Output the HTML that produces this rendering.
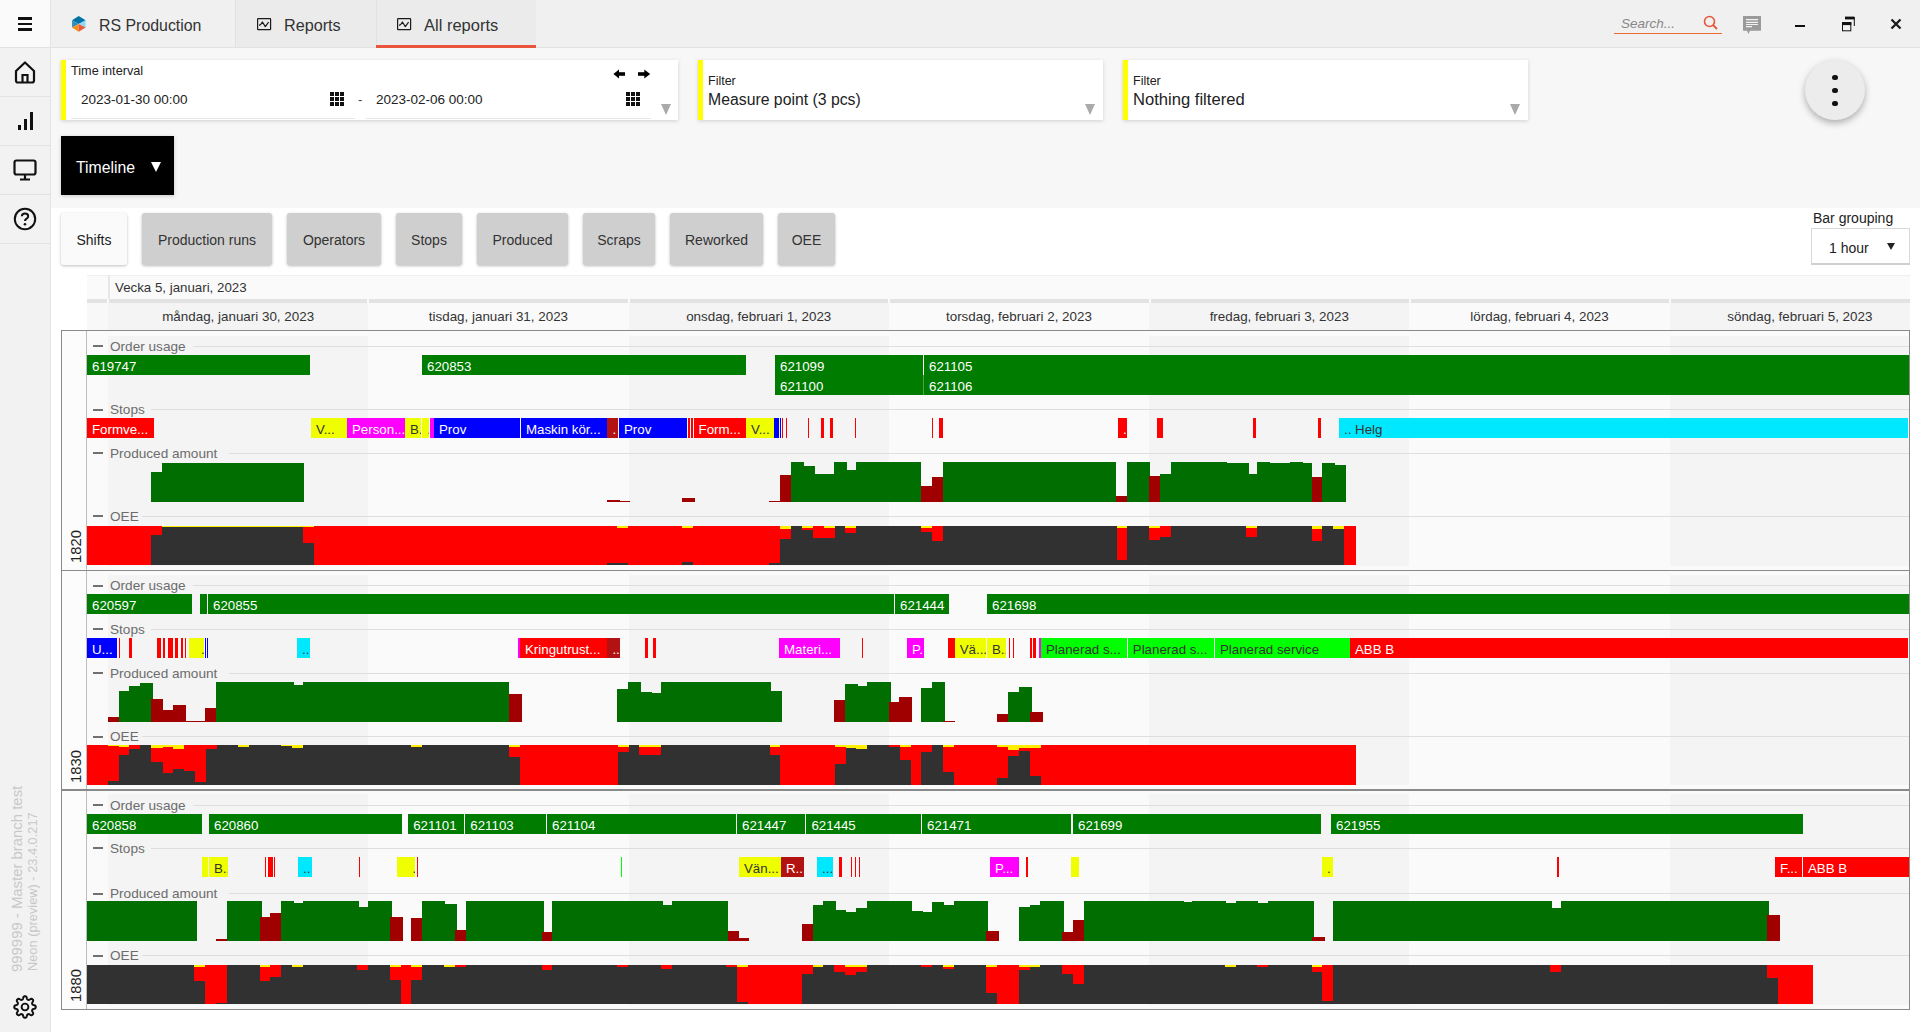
<!DOCTYPE html>
<html><head><meta charset="utf-8">
<style>
*{box-sizing:border-box;margin:0;padding:0}
html,body{width:1920px;height:1032px;overflow:hidden;background:#f7f7f7;font-family:"Liberation Sans",sans-serif;color:#222}
body{position:relative}
.a{position:absolute}
.t{position:absolute;white-space:nowrap}
.card{position:absolute;background:#fff;box-shadow:0 1px 4px rgba(0,0,0,.16)}
.stripe{position:absolute;left:0;top:0;width:5px;height:100%;background:#ffff00}
.btn{position:absolute;top:213px;height:52px;background:#cfcfcf;border-radius:3px;box-shadow:0 1px 3px rgba(0,0,0,.28);font-size:14px;line-height:54px;text-align:center;color:#333;white-space:nowrap}
.tri{position:absolute;width:0;height:0;border-left:5.5px solid transparent;border-right:5.5px solid transparent;border-top:11px solid #aaa}
.grid{position:absolute;width:14px;height:14px;background:
 linear-gradient(#fff,#fff) 4px 0/1px 14px no-repeat,
 linear-gradient(#fff,#fff) 9px 0/1px 14px no-repeat,
 linear-gradient(#fff,#fff) 0 4px/14px 1px no-repeat,
 linear-gradient(#fff,#fff) 0 9px/14px 1px no-repeat,#111}
.sep{position:absolute;left:0;width:50px;height:1px;background:#e2e2e2}
.sec{position:absolute;left:87px;width:1823px;height:20px}
.sec .m{position:absolute;left:6px;top:8px;width:10px;height:2px;background:#555}
.sec .n{position:absolute;left:23px;top:0;font-size:13.5px;line-height:17px;color:#555;background:inherit;padding-right:6px}
.sec .l{position:absolute;left:0;right:0;top:8px;height:1px;background:#dcdcdc}
.r{position:absolute;color:#fff;font-size:13.5px;line-height:19px;white-space:nowrap;overflow:hidden;padding-left:4px}
</style><style>
.b{position:absolute}
.r{position:absolute;color:#fff;font-size:13.3px;line-height:19px;white-space:nowrap;overflow:hidden;padding-left:5px;text-overflow:clip}
.sl{position:absolute;font-size:13.6px;line-height:17px;color:#6c6c6c;white-space:nowrap}
.dh{position:absolute;top:307.5px;width:260.3px;text-align:center;font-size:13.4px;line-height:17px;color:#333;white-space:nowrap}
.rl{position:absolute;width:40px;height:16px;transform-origin:0 0;transform:rotate(-90deg);font-size:14.8px;line-height:16px;color:#222;white-space:nowrap}
</style>
</head><body>
<!-- sidebar -->
<div class="a" style="left:0;top:0;width:51px;height:1032px;background:#f2f2f2;border-right:1px solid #e4e4e4"></div>
<div class="a" style="left:0;top:0;width:50px;height:47px;background:#fafafa"></div>
<div class="sep" style="top:47px"></div>
<div class="sep" style="top:96px"></div>
<div class="sep" style="top:145px"></div>
<div class="sep" style="top:194px"></div>
<div class="sep" style="top:243px"></div>
<!-- hamburger -->
<div class="a" style="left:18px;top:17px;width:14px;height:2.5px;background:#111"></div>
<div class="a" style="left:18px;top:22.5px;width:14px;height:2.5px;background:#111"></div>
<div class="a" style="left:18px;top:28px;width:14px;height:2.5px;background:#111"></div>
<!-- home -->
<svg class="a" style="left:13px;top:59px" width="24" height="26" viewBox="0 0 24 26"><path d="M3 12 L12 3.5 L21 12 V21.5 Q21 23.5 19 23.5 H5 Q3 23.5 3 21.5 Z" fill="none" stroke="#111" stroke-width="2.2" stroke-linejoin="round"/><path d="M9.5 23.5 V16 H14.5 V23.5" fill="none" stroke="#111" stroke-width="2.2"/></svg>
<!-- bar chart -->
<div class="a" style="left:18px;top:125px;width:2.5px;height:5px;background:#111"></div>
<div class="a" style="left:24px;top:119px;width:2.5px;height:11px;background:#111"></div>
<div class="a" style="left:30px;top:112px;width:2.5px;height:18px;background:#111"></div>
<!-- monitor -->
<svg class="a" style="left:13px;top:159px" width="24" height="23" viewBox="0 0 24 23"><rect x="1.5" y="1.5" width="21" height="14" rx="2" fill="none" stroke="#111" stroke-width="2.2"/><path d="M12 16 V20 M7 20.5 H17" stroke="#111" stroke-width="2.2"/></svg>
<!-- help -->
<svg class="a" style="left:13px;top:207px" width="24" height="24" viewBox="0 0 24 24"><circle cx="12" cy="12" r="10.2" fill="none" stroke="#111" stroke-width="2"/><path d="M8.8 9.3 Q9 6.5 12 6.5 Q15.2 6.5 15.2 9.2 Q15.2 11 13.2 12 Q12 12.6 12 14" fill="none" stroke="#111" stroke-width="2"/><circle cx="12" cy="17.3" r="1.3" fill="#111"/></svg>
<!-- version text -->
<div class="t" style="left:9px;top:972px;transform-origin:0 0;transform:rotate(-90deg);font-size:14.9px;line-height:16px;color:#c8c8c8">999999 - Master branch test</div>
<div class="t" style="left:26px;top:971px;transform-origin:0 0;transform:rotate(-90deg);font-size:12.8px;line-height:14px;color:#c8c8c8">Neon (preview) - 23.4.0.217</div>
<!-- gear -->
<svg class="a" style="left:12px;top:994px" width="26" height="26" viewBox="0 0 26 26"><path d="M13.00,2.25 L13.34,2.27 L13.67,2.33 L14.00,2.47 L14.30,2.71 L14.56,3.13 L14.77,3.72 L14.93,4.35 L15.09,4.87 L15.26,5.21 L15.46,5.43 L15.67,5.58 L15.89,5.70 L16.12,5.79 L16.36,5.87 L16.61,5.91 L16.91,5.89 L17.27,5.77 L17.75,5.52 L18.31,5.18 L18.87,4.92 L19.35,4.81 L19.74,4.85 L20.07,4.98 L20.35,5.17 L20.60,5.40 L20.83,5.65 L21.02,5.93 L21.15,6.26 L21.19,6.65 L21.08,7.13 L20.82,7.69 L20.48,8.25 L20.23,8.73 L20.11,9.09 L20.09,9.39 L20.13,9.64 L20.21,9.88 L20.30,10.11 L20.42,10.33 L20.57,10.54 L20.79,10.74 L21.13,10.91 L21.65,11.07 L22.28,11.23 L22.87,11.44 L23.29,11.70 L23.53,12.00 L23.67,12.33 L23.73,12.66 L23.75,13.00 L23.73,13.34 L23.67,13.67 L23.53,14.00 L23.29,14.30 L22.87,14.56 L22.28,14.77 L21.65,14.93 L21.13,15.09 L20.79,15.26 L20.57,15.46 L20.42,15.67 L20.30,15.89 L20.21,16.12 L20.13,16.36 L20.09,16.61 L20.11,16.91 L20.23,17.27 L20.48,17.75 L20.82,18.31 L21.08,18.87 L21.19,19.35 L21.15,19.74 L21.02,20.07 L20.83,20.35 L20.60,20.60 L20.35,20.83 L20.07,21.02 L19.74,21.15 L19.35,21.19 L18.87,21.08 L18.31,20.82 L17.75,20.48 L17.27,20.23 L16.91,20.11 L16.61,20.09 L16.36,20.13 L16.12,20.21 L15.89,20.30 L15.67,20.42 L15.46,20.57 L15.26,20.79 L15.09,21.13 L14.93,21.65 L14.77,22.28 L14.56,22.87 L14.30,23.29 L14.00,23.53 L13.67,23.67 L13.34,23.73 L13.00,23.75 L12.66,23.73 L12.33,23.67 L12.00,23.53 L11.70,23.29 L11.44,22.87 L11.23,22.28 L11.07,21.65 L10.91,21.13 L10.74,20.79 L10.54,20.57 L10.33,20.42 L10.11,20.30 L9.88,20.21 L9.64,20.13 L9.39,20.09 L9.09,20.11 L8.73,20.23 L8.25,20.48 L7.69,20.82 L7.13,21.08 L6.65,21.19 L6.26,21.15 L5.93,21.02 L5.65,20.83 L5.40,20.60 L5.17,20.35 L4.98,20.07 L4.85,19.74 L4.81,19.35 L4.92,18.87 L5.18,18.31 L5.52,17.75 L5.77,17.27 L5.89,16.91 L5.91,16.61 L5.87,16.36 L5.79,16.12 L5.70,15.89 L5.58,15.67 L5.43,15.46 L5.21,15.26 L4.87,15.09 L4.35,14.93 L3.72,14.77 L3.13,14.56 L2.71,14.30 L2.47,14.00 L2.33,13.67 L2.27,13.34 L2.25,13.00 L2.27,12.66 L2.33,12.33 L2.47,12.00 L2.71,11.70 L3.13,11.44 L3.72,11.23 L4.35,11.07 L4.87,10.91 L5.21,10.74 L5.43,10.54 L5.58,10.33 L5.70,10.11 L5.79,9.88 L5.87,9.64 L5.91,9.39 L5.89,9.09 L5.77,8.73 L5.52,8.25 L5.18,7.69 L4.92,7.13 L4.81,6.65 L4.85,6.26 L4.98,5.93 L5.17,5.65 L5.40,5.40 L5.65,5.17 L5.93,4.98 L6.26,4.85 L6.65,4.81 L7.13,4.92 L7.69,5.18 L8.25,5.52 L8.73,5.77 L9.09,5.89 L9.39,5.91 L9.64,5.87 L9.88,5.79 L10.11,5.70 L10.33,5.58 L10.54,5.43 L10.74,5.21 L10.91,4.87 L11.07,4.35 L11.23,3.72 L11.44,3.13 L11.70,2.71 L12.00,2.47 L12.33,2.33 L12.66,2.27 Z" fill="none" stroke="#111" stroke-width="2" stroke-linejoin="round"/><circle cx="13" cy="13" r="3.4" fill="none" stroke="#111" stroke-width="1.9"/></svg>

<!-- top bar -->
<div class="a" style="left:51px;top:0;width:1869px;height:48px;background:#f0f0f0;border-bottom:1px solid #e2e2e2"></div>
<div class="a" style="left:235px;top:0;width:141px;height:47px;background:#ebebeb;border-left:1px solid #e2e2e2"></div>
<div class="a" style="left:376px;top:0;width:160px;height:47px;background:#ebebeb;border-left:1px solid #e2e2e2"></div>
<div class="a" style="left:376px;top:45px;width:160px;height:3px;background:#e8553a"></div>
<!-- logo -->
<svg class="a" style="left:71px;top:15px" width="16" height="18" viewBox="0 0 16 18"><polygon points="7.7,1.1 14.6,5.2 7.7,9 1.05,5.2" fill="#0073a6"/><polygon points="1.05,5.2 7.7,9 1.05,12.6" fill="#2e8fbf"/><polygon points="14.6,5.2 14.6,12.6 7.7,9" fill="#8fd9f7"/><polygon points="1.05,12.6 7.7,9 7.7,16.7" fill="#f39019"/><polygon points="7.7,9 14.6,12.6 7.7,16.7" fill="#eb5a35"/></svg>
<div class="t" style="left:99px;top:1.5px;font-size:15.9px;line-height:48px;color:#333">RS Production</div>
<svg class="a" style="left:256px;top:17px" width="16" height="14" viewBox="0 0 16 14"><rect x="1.6" y="1.6" width="13" height="11" rx="0.6" fill="none" stroke="#1a1a1a" stroke-width="1.2"/><path d="M3 8.4 Q4.8 8.3 6.4 5 L9.3 9.6 L12.6 5.2" fill="none" stroke="#1a1a1a" stroke-width="1.2" stroke-linejoin="round"/></svg>
<div class="t" style="left:284px;top:1.3px;font-size:16.2px;line-height:48px;color:#333">Reports</div>
<svg class="a" style="left:396px;top:17px" width="16" height="14" viewBox="0 0 16 14"><rect x="1.6" y="1.6" width="13" height="11" rx="0.6" fill="none" stroke="#1a1a1a" stroke-width="1.2"/><path d="M3 8.4 Q4.8 8.3 6.4 5 L9.3 9.6 L12.6 5.2" fill="none" stroke="#1a1a1a" stroke-width="1.2" stroke-linejoin="round"/></svg>
<div class="t" style="left:424px;top:1.3px;font-size:16.5px;line-height:48px;color:#333">All reports</div>
<!-- search -->
<div class="t" style="left:1621px;top:16px;font-size:13.5px;line-height:16px;color:#888;font-style:italic">Search...</div>
<div class="a" style="left:1614px;top:32.5px;width:108px;height:1.5px;background:#f06a35"></div>
<svg class="a" style="left:1703px;top:15px" width="16" height="16" viewBox="0 0 16 16"><circle cx="6.5" cy="6.5" r="5" fill="none" stroke="#e8553a" stroke-width="1.6"/><path d="M10 10 L14 14" stroke="#e8553a" stroke-width="1.8"/></svg>
<svg class="a" style="left:1743px;top:16px" width="18" height="19" viewBox="0 0 18 19"><path d="M0 0 H18 V14.8 H7 L5.5 18 L4 14.8 H0 Z" fill="#9a9a9a"/><path d="M3 3.6 H15 M3 6.4 H15 M3 8.5 H15 M3 10.6 H9" stroke="#f2f2f2" stroke-width="1.1"/></svg>
<div class="a" style="left:1795px;top:25px;width:10px;height:2px;background:#111"></div>
<svg class="a" style="left:1840px;top:16px" width="16" height="16" viewBox="0 0 16 16"><path d="M5 1.1 H14.3 V10" fill="none" stroke="#111" stroke-width="1"/><rect x="5" y="1" width="9.5" height="2.4" fill="#111"/><rect x="2.5" y="6.6" width="8.3" height="8.2" fill="none" stroke="#111" stroke-width="1"/><rect x="2" y="6.1" width="9.3" height="3" fill="#111"/></svg>
<svg class="a" style="left:1890px;top:18px" width="12" height="12" viewBox="0 0 12 12"><path d="M1.5 1.5 L10.5 10.5 M10.5 1.5 L1.5 10.5" stroke="#1a1a1a" stroke-width="2.3"/></svg>

<!-- time interval card -->
<div class="card" style="left:61px;top:60px;width:617px;height:60px">
  <div class="stripe"></div>
</div>
<div class="t" style="left:71px;top:64px;font-size:12.7px;line-height:15px;color:#222">Time interval</div>
<div class="t" style="left:81px;top:92px;font-size:13.5px;line-height:16px;color:#222">2023-01-30 00:00</div>
<div class="grid" style="left:330px;top:92px"></div>
<div class="a" style="left:71px;top:118px;width:284px;height:1px;background:#e6e6e6"></div>
<div class="t" style="left:358px;top:92px;font-size:13px;line-height:16px;color:#444">-</div>
<div class="t" style="left:376px;top:92px;font-size:13.5px;line-height:16px;color:#222">2023-02-06 00:00</div>
<div class="grid" style="left:626px;top:92px"></div>
<div class="a" style="left:366px;top:118px;width:285px;height:1px;background:#e6e6e6"></div>
<svg class="a" style="left:612px;top:68px" width="40" height="12" viewBox="0 0 40 12"><path d="M13 6 H6" stroke="#000" stroke-width="3.6"/><path d="M1.4 6 L7 1.5 V10.5 Z" fill="#000"/><path d="M26 6 H33" stroke="#000" stroke-width="3.6"/><path d="M38.2 6 L32.3 1.5 V10.5 Z" fill="#000"/></svg>
<div class="tri" style="left:661px;top:104px"></div>

<!-- filter cards -->
<div class="card" style="left:698px;top:60px;width:405px;height:60px"><div class="stripe"></div></div>
<div class="t" style="left:708px;top:74px;font-size:12.5px;line-height:15px;color:#222">Filter</div>
<div class="t" style="left:708px;top:91px;font-size:15.8px;line-height:18px;color:#222">Measure point (3 pcs)</div>
<div class="tri" style="left:1085px;top:104px"></div>
<div class="card" style="left:1123px;top:60px;width:405px;height:60px"><div class="stripe"></div></div>
<div class="t" style="left:1133px;top:74px;font-size:12.5px;line-height:15px;color:#222">Filter</div>
<div class="t" style="left:1133px;top:91px;font-size:16.6px;line-height:18px;color:#222">Nothing filtered</div>
<div class="tri" style="left:1510px;top:104px"></div>
<!-- kebab -->
<div class="a" style="left:1805px;top:60px;width:60px;height:60px;border-radius:50%;background:#ececec;box-shadow:0 3px 7px rgba(0,0,0,.3)"></div>
<div class="a" style="left:1832px;top:74.5px;width:5.5px;height:5.5px;border-radius:50%;background:#111"></div>
<div class="a" style="left:1832px;top:87.5px;width:5.5px;height:5.5px;border-radius:50%;background:#111"></div>
<div class="a" style="left:1832px;top:100.5px;width:5.5px;height:5.5px;border-radius:50%;background:#111"></div>

<!-- timeline button -->
<div class="a" style="left:61px;top:136px;width:113px;height:59px;background:#000;box-shadow:0 1px 4px rgba(0,0,0,.2)"></div>
<div class="t" style="left:76px;top:158.5px;font-size:15.8px;line-height:18px;color:#fff">Timeline</div>
<div class="a" style="left:151px;top:162px;width:0;height:0;border-left:5px solid transparent;border-right:5px solid transparent;border-top:10px solid #fff"></div>

<!-- white area -->
<div class="a" style="left:51px;top:208px;width:1869px;height:824px;background:#fff"></div>
<div class="a" style="left:61px;top:213px;width:66px;height:52px;background:#fafafa;border-radius:3px;box-shadow:0 1px 3px rgba(0,0,0,.25);font-size:14px;line-height:54px;text-align:center;color:#222">Shifts</div>
<div class="btn" style="left:142px;width:130px">Production runs</div>
<div class="btn" style="left:287px;width:94px">Operators</div>
<div class="btn" style="left:396px;width:66px">Stops</div>
<div class="btn" style="left:477px;width:91px">Produced</div>
<div class="btn" style="left:583px;width:72px">Scraps</div>
<div class="btn" style="left:670px;width:93px">Reworked</div>
<div class="btn" style="left:778px;width:57px">OEE</div>
<div class="t" style="left:1813px;top:210px;font-size:14px;line-height:17px;color:#222">Bar grouping</div>
<div class="a" style="left:1811px;top:228px;width:99px;height:37px;background:#fff;border:1px solid #d8d8d8;border-bottom:2px solid #cfcfcf"></div>
<div class="t" style="left:1829px;top:240px;font-size:14px;line-height:17px;color:#222">1 hour</div>
<div class="a" style="left:1887px;top:243px;width:0;height:0;border-left:4px solid transparent;border-right:4px solid transparent;border-top:7px solid #222"></div>
<!-- timeline header -->
<div class="a" style="left:87px;top:275px;width:1823px;height:56px;background:#fafafa"></div>
<div class="a" style="left:87px;top:303px;width:21px;height:28px;background:#f8f8f8"></div>
<div class="a" style="left:108px;top:303px;width:260.3px;height:28px;background:#f4f4f4"></div>
<div class="a" style="left:628.6px;top:303px;width:260.3px;height:28px;background:#f4f4f4"></div>
<div class="a" style="left:1149.1px;top:303px;width:260.3px;height:28px;background:#f4f4f4"></div>
<div class="a" style="left:1669.7px;top:303px;width:240px;height:28px;background:#f4f4f4"></div>
<div class="a" style="left:87px;top:275px;width:1823px;height:1px;background:#efefef"></div>
<div class="a" style="left:107.5px;top:275px;width:2px;height:28px;background:#e6e6e6"></div>
<div class="a" style="left:87px;top:299px;width:1823px;height:4px;background:#e3e3e3"></div>
<div class="a" style="left:106.5px;top:299px;width:2px;height:4px;background:#fafafa"></div>
<div class="a" style="left:367px;top:299px;width:2px;height:4px;background:#fafafa"></div>
<div class="a" style="left:628px;top:299px;width:2px;height:4px;background:#fafafa"></div>
<div class="a" style="left:888px;top:299px;width:2px;height:4px;background:#fafafa"></div>
<div class="a" style="left:1148.5px;top:299px;width:2px;height:4px;background:#fafafa"></div>
<div class="a" style="left:1408.5px;top:299px;width:2px;height:4px;background:#fafafa"></div>
<div class="a" style="left:1669px;top:299px;width:2px;height:4px;background:#fafafa"></div>
<div class="t" style="left:115px;top:279.5px;font-size:13.3px;line-height:16px;color:#333">Vecka 5, januari, 2023</div>
<div class="dh" style="left:108px">måndag, januari 30, 2023</div>
<div class="dh" style="left:368.3px">tisdag, januari 31, 2023</div>
<div class="dh" style="left:628.6px">onsdag, februari 1, 2023</div>
<div class="dh" style="left:888.8px">torsdag, februari 2, 2023</div>
<div class="dh" style="left:1149.1px">fredag, februari 3, 2023</div>
<div class="dh" style="left:1409.4px">lördag, februari 4, 2023</div>
<div class="dh" style="left:1669.7px">söndag, februari 5, 2023</div>
<!-- frame -->
<div class="a" style="left:61px;top:330px;width:1849px;height:680px;background:#fcfcfc;border:1px solid #8a8a8a"></div>
<div class="b" style="left:87px;top:331px;width:1822px;height:239px;background:#fafafa"></div>
<div class="b" style="left:108px;top:336px;width:260px;height:230px;background:#f4f4f4"></div>
<div class="b" style="left:629px;top:336px;width:260px;height:230px;background:#f4f4f4"></div>
<div class="b" style="left:1149px;top:336px;width:260px;height:230px;background:#f4f4f4"></div>
<div class="b" style="left:1670px;top:336px;width:239px;height:230px;background:#f4f4f4"></div>
<div class="b" style="left:87px;top:570px;width:1822px;height:220px;background:#fafafa"></div>
<div class="b" style="left:108px;top:575px;width:260px;height:210px;background:#f4f4f4"></div>
<div class="b" style="left:629px;top:575px;width:260px;height:210px;background:#f4f4f4"></div>
<div class="b" style="left:1149px;top:575px;width:260px;height:210px;background:#f4f4f4"></div>
<div class="b" style="left:1670px;top:575px;width:239px;height:210px;background:#f4f4f4"></div>
<div class="b" style="left:87px;top:790px;width:1822px;height:219px;background:#fafafa"></div>
<div class="b" style="left:108px;top:794px;width:260px;height:211px;background:#f4f4f4"></div>
<div class="b" style="left:629px;top:794px;width:260px;height:211px;background:#f4f4f4"></div>
<div class="b" style="left:1149px;top:794px;width:260px;height:211px;background:#f4f4f4"></div>
<div class="b" style="left:1670px;top:794px;width:239px;height:211px;background:#f4f4f4"></div>
<div class="b" style="left:93px;top:345.0px;width:10px;height:2px;background:#707070"></div>
<div class="sl" style="left:110px;top:337.7px">Order usage</div>
<div class="b" style="left:193.0px;top:345.5px;width:1716.0px;height:1px;background:#dedede"></div>
<div class="b" style="left:93px;top:408.5px;width:10px;height:2px;background:#707070"></div>
<div class="sl" style="left:110px;top:401.2px">Stops</div>
<div class="b" style="left:151.0px;top:409.0px;width:1758.0px;height:1px;background:#dedede"></div>
<div class="b" style="left:93px;top:452.4px;width:10px;height:2px;background:#707070"></div>
<div class="sl" style="left:110px;top:445.1px">Produced amount</div>
<div class="b" style="left:229.0px;top:452.9px;width:1680.0px;height:1px;background:#dedede"></div>
<div class="b" style="left:93px;top:515.3px;width:10px;height:2px;background:#707070"></div>
<div class="sl" style="left:110px;top:508.0px">OEE</div>
<div class="b" style="left:142.0px;top:515.8px;width:1767.0px;height:1px;background:#dedede"></div>
<div class="b" style="left:93px;top:584.5px;width:10px;height:2px;background:#707070"></div>
<div class="sl" style="left:110px;top:577.2px">Order usage</div>
<div class="b" style="left:193.0px;top:585.0px;width:1716.0px;height:1px;background:#dedede"></div>
<div class="b" style="left:93px;top:628.0px;width:10px;height:2px;background:#707070"></div>
<div class="sl" style="left:110px;top:620.7px">Stops</div>
<div class="b" style="left:151.0px;top:628.5px;width:1758.0px;height:1px;background:#dedede"></div>
<div class="b" style="left:93px;top:672.0px;width:10px;height:2px;background:#707070"></div>
<div class="sl" style="left:110px;top:664.7px">Produced amount</div>
<div class="b" style="left:229.0px;top:672.5px;width:1680.0px;height:1px;background:#dedede"></div>
<div class="b" style="left:93px;top:735.6px;width:10px;height:2px;background:#707070"></div>
<div class="sl" style="left:110px;top:728.3px">OEE</div>
<div class="b" style="left:142.0px;top:736.1px;width:1767.0px;height:1px;background:#dedede"></div>
<div class="b" style="left:93px;top:804.3px;width:10px;height:2px;background:#707070"></div>
<div class="sl" style="left:110px;top:797.0px">Order usage</div>
<div class="b" style="left:193.0px;top:804.8px;width:1716.0px;height:1px;background:#dedede"></div>
<div class="b" style="left:93px;top:847.4px;width:10px;height:2px;background:#707070"></div>
<div class="sl" style="left:110px;top:840.1px">Stops</div>
<div class="b" style="left:151.0px;top:847.9px;width:1758.0px;height:1px;background:#dedede"></div>
<div class="b" style="left:93px;top:892.5px;width:10px;height:2px;background:#707070"></div>
<div class="sl" style="left:110px;top:885.2px">Produced amount</div>
<div class="b" style="left:229.0px;top:893.0px;width:1680.0px;height:1px;background:#dedede"></div>
<div class="b" style="left:93px;top:954.7px;width:10px;height:2px;background:#707070"></div>
<div class="sl" style="left:110px;top:947.4px">OEE</div>
<div class="b" style="left:142.0px;top:955.2px;width:1767.0px;height:1px;background:#dedede"></div>
<div class="b" style="left:87px;top:355px;width:223px;height:20px;background:#007c00"></div>
<div class="r" style="left:87.0px;top:356.6px;width:223.0px;color:#fff">619747</div>
<div class="b" style="left:422px;top:355px;width:324px;height:20px;background:#007c00"></div>
<div class="r" style="left:422.0px;top:356.6px;width:324.0px;color:#fff">620853</div>
<div class="b" style="left:775px;top:355px;width:148px;height:40px;background:#007c00"></div>
<div class="r" style="left:775.0px;top:356.6px;width:148.0px;color:#fff">621099</div>
<div class="r" style="left:775.0px;top:376.6px;width:148.0px;color:#fff">621100</div>
<div class="b" style="left:924px;top:355px;width:985px;height:40px;background:#007c00"></div>
<div class="r" style="left:924.0px;top:356.6px;width:985.0px;color:#fff">621105</div>
<div class="r" style="left:924.0px;top:376.6px;width:985.0px;color:#fff">621106</div>
<div class="b" style="left:923px;top:375px;width:1px;height:20px;background:#4f9f4f"></div>
<div class="b" style="left:87px;top:418px;width:67px;height:20px;background:#ff0000"></div>
<div class="r" style="left:87.0px;top:419.7px;width:67.0px;color:#fff">Formve...</div>
<div class="b" style="left:311px;top:418px;width:30px;height:20px;background:#f0ff00"></div>
<div class="r" style="left:311.0px;top:419.7px;width:30.0px;color:#333">V...</div>
<div class="b" style="left:341px;top:418px;width:6px;height:20px;background:#f0ff00"></div>
<div class="r" style="left:341.0px;top:419.7px;width:6.0px;color:#333">.</div>
<div class="b" style="left:347px;top:418px;width:58px;height:20px;background:#ff00ff"></div>
<div class="r" style="left:347.0px;top:419.7px;width:58.0px;color:#fff">Person...</div>
<div class="b" style="left:405px;top:418px;width:16px;height:20px;background:#f0ff00"></div>
<div class="r" style="left:405.0px;top:419.7px;width:16.4px;color:#333">B.</div>
<div class="b" style="left:422px;top:418px;width:7px;height:20px;background:#f0ff00"></div>
<div class="r" style="left:422.2px;top:419.7px;width:6.8px;color:#333">.</div>
<div class="b" style="left:430px;top:418px;width:4px;height:20px;background:#ff00ff"></div>
<div class="b" style="left:434px;top:418px;width:86px;height:20px;background:#0000ff"></div>
<div class="r" style="left:434.0px;top:419.7px;width:86.0px;color:#fff">Prov</div>
<div class="b" style="left:521px;top:418px;width:86px;height:20px;background:#0000ff"></div>
<div class="r" style="left:521.0px;top:419.7px;width:86.4px;color:#fff">Maskin kör...</div>
<div class="b" style="left:607px;top:418px;width:11px;height:20px;background:#b31212"></div>
<div class="r" style="left:607.4px;top:419.7px;width:10.3px;color:#fff">.</div>
<div class="b" style="left:619px;top:418px;width:68px;height:20px;background:#0000ff"></div>
<div class="r" style="left:619.0px;top:419.7px;width:68.0px;color:#fff">Prov</div>
<div class="b" style="left:688px;top:418px;width:2px;height:20px;background:#ff0000"></div>
<div class="b" style="left:691px;top:418px;width:2px;height:20px;background:#ff0000"></div>
<div class="b" style="left:694px;top:418px;width:52px;height:20px;background:#ff0000"></div>
<div class="r" style="left:693.6px;top:419.7px;width:52.4px;color:#fff">Form...</div>
<div class="b" style="left:746px;top:418px;width:28px;height:20px;background:#f0ff00"></div>
<div class="r" style="left:746.0px;top:419.7px;width:28.0px;color:#333">V...</div>
<div class="b" style="left:774px;top:418px;width:5px;height:20px;background:#0000ff"></div>
<div class="b" style="left:780px;top:418px;width:1px;height:20px;background:#0000ff"></div>
<div class="b" style="left:782px;top:418px;width:1px;height:20px;background:#ff0000"></div>
<div class="b" style="left:786px;top:418px;width:1px;height:20px;background:#ff0000"></div>
<div class="b" style="left:808px;top:418px;width:1px;height:20px;background:#ff0000"></div>
<div class="b" style="left:821px;top:418px;width:3px;height:20px;background:#ff0000"></div>
<div class="b" style="left:830px;top:418px;width:3px;height:20px;background:#ff0000"></div>
<div class="b" style="left:855px;top:418px;width:1px;height:20px;background:#ff0000"></div>
<div class="b" style="left:932px;top:418px;width:1px;height:20px;background:#ff0000"></div>
<div class="b" style="left:939px;top:418px;width:4px;height:20px;background:#ff0000"></div>
<div class="b" style="left:1118px;top:418px;width:9px;height:20px;background:#ff0000"></div>
<div class="r" style="left:1118.0px;top:419.7px;width:9.0px;color:#fff">.</div>
<div class="b" style="left:1157px;top:418px;width:6px;height:20px;background:#ff0000"></div>
<div class="b" style="left:1253px;top:418px;width:3px;height:20px;background:#ff0000"></div>
<div class="b" style="left:1318px;top:418px;width:3px;height:20px;background:#ff0000"></div>
<div class="b" style="left:1339px;top:418px;width:569px;height:20px;background:#00e8ff"></div>
<div class="r" style="left:1339.0px;top:419.7px;width:569.0px;color:#333">.. Helg</div>
<div class="b" style="left:151px;top:472px;width:11px;height:30px;background:#006e00"></div>
<div class="b" style="left:162px;top:463px;width:142px;height:39px;background:#006e00"></div>
<div class="b" style="left:607px;top:500px;width:13px;height:2px;background:#a00000"></div>
<div class="b" style="left:620px;top:501px;width:10px;height:1px;background:#a00000"></div>
<div class="b" style="left:682px;top:498px;width:13px;height:4px;background:#a00000"></div>
<div class="b" style="left:769px;top:501px;width:11px;height:1px;background:#a00000"></div>
<div class="b" style="left:780px;top:475px;width:11px;height:27px;background:#a00000"></div>
<div class="b" style="left:791px;top:462px;width:13px;height:40px;background:#006e00"></div>
<div class="b" style="left:804px;top:466px;width:11px;height:36px;background:#006e00"></div>
<div class="b" style="left:815px;top:474px;width:19px;height:28px;background:#006e00"></div>
<div class="b" style="left:834px;top:462px;width:13px;height:40px;background:#006e00"></div>
<div class="b" style="left:847px;top:470px;width:9px;height:32px;background:#006e00"></div>
<div class="b" style="left:856px;top:462px;width:65px;height:40px;background:#006e00"></div>
<div class="b" style="left:921px;top:486px;width:11px;height:16px;background:#a00000"></div>
<div class="b" style="left:932px;top:477px;width:11px;height:25px;background:#a00000"></div>
<div class="b" style="left:943px;top:462px;width:173px;height:40px;background:#006e00"></div>
<div class="b" style="left:1116px;top:496px;width:11px;height:6px;background:#a00000"></div>
<div class="b" style="left:1127px;top:462px;width:23px;height:40px;background:#006e00"></div>
<div class="b" style="left:1149px;top:476px;width:11px;height:26px;background:#a00000"></div>
<div class="b" style="left:1160px;top:474px;width:11px;height:28px;background:#006e00"></div>
<div class="b" style="left:1171px;top:462px;width:56px;height:40px;background:#006e00"></div>
<div class="b" style="left:1227px;top:463px;width:22px;height:39px;background:#006e00"></div>
<div class="b" style="left:1249px;top:474px;width:8px;height:28px;background:#006e00"></div>
<div class="b" style="left:1257px;top:462px;width:13px;height:40px;background:#006e00"></div>
<div class="b" style="left:1270px;top:463px;width:20px;height:39px;background:#006e00"></div>
<div class="b" style="left:1290px;top:462px;width:13px;height:40px;background:#006e00"></div>
<div class="b" style="left:1303px;top:463px;width:9px;height:39px;background:#006e00"></div>
<div class="b" style="left:1312px;top:477px;width:10px;height:25px;background:#a00000"></div>
<div class="b" style="left:1322px;top:463px;width:13px;height:39px;background:#006e00"></div>
<div class="b" style="left:1335px;top:465px;width:11px;height:37px;background:#006e00"></div>
<div class="b" style="left:87px;top:526px;width:1269px;height:39px;background:#313131"></div>
<div class="b" style="left:87px;top:526px;width:64px;height:39px;background:#ff0000"></div>
<div class="b" style="left:151px;top:526px;width:11px;height:9px;background:#ff0000"></div>
<div class="b" style="left:162px;top:526px;width:141px;height:1px;background:#ffee00"></div>
<div class="b" style="left:303px;top:526px;width:11px;height:1px;background:#ffee00"></div>
<div class="b" style="left:303px;top:527px;width:11px;height:16px;background:#ff0000"></div>
<div class="b" style="left:314px;top:526px;width:466px;height:39px;background:#ff0000"></div>
<div class="b" style="left:780px;top:526px;width:11px;height:3px;background:#ffee00"></div>
<div class="b" style="left:780px;top:529px;width:11px;height:10px;background:#ff0000"></div>
<div class="b" style="left:802px;top:526px;width:11px;height:2px;background:#ffee00"></div>
<div class="b" style="left:802px;top:528px;width:11px;height:2px;background:#ff0000"></div>
<div class="b" style="left:813px;top:526px;width:11px;height:12px;background:#ff0000"></div>
<div class="b" style="left:824px;top:526px;width:11px;height:2px;background:#ffee00"></div>
<div class="b" style="left:824px;top:528px;width:11px;height:10px;background:#ff0000"></div>
<div class="b" style="left:845px;top:526px;width:11px;height:2px;background:#ffee00"></div>
<div class="b" style="left:845px;top:528px;width:11px;height:5px;background:#ff0000"></div>
<div class="b" style="left:921px;top:526px;width:11px;height:2px;background:#ffee00"></div>
<div class="b" style="left:921px;top:528px;width:11px;height:4px;background:#ff0000"></div>
<div class="b" style="left:932px;top:526px;width:11px;height:15px;background:#ff0000"></div>
<div class="b" style="left:1117px;top:526px;width:10px;height:2px;background:#ffee00"></div>
<div class="b" style="left:1117px;top:528px;width:10px;height:32px;background:#ff0000"></div>
<div class="b" style="left:1149px;top:526px;width:11px;height:2px;background:#ffee00"></div>
<div class="b" style="left:1149px;top:528px;width:11px;height:12px;background:#ff0000"></div>
<div class="b" style="left:1160px;top:526px;width:11px;height:11px;background:#ff0000"></div>
<div class="b" style="left:1246px;top:526px;width:11px;height:2px;background:#ffee00"></div>
<div class="b" style="left:1246px;top:528px;width:11px;height:9px;background:#ff0000"></div>
<div class="b" style="left:1312px;top:526px;width:10px;height:3px;background:#ffee00"></div>
<div class="b" style="left:1312px;top:529px;width:10px;height:12px;background:#ff0000"></div>
<div class="b" style="left:1333px;top:526px;width:11px;height:3px;background:#ffee00"></div>
<div class="b" style="left:1344px;top:526px;width:12px;height:39px;background:#ff0000"></div>
<div class="b" style="left:607px;top:563px;width:21px;height:2px;background:#313131"></div>
<div class="b" style="left:617px;top:526px;width:11px;height:2px;background:#ffee00"></div>
<div class="b" style="left:682px;top:526px;width:11px;height:2px;background:#ffee00"></div>
<div class="b" style="left:682px;top:562px;width:11px;height:3px;background:#313131"></div>
<div class="b" style="left:769px;top:563px;width:11px;height:2px;background:#313131"></div>
<div class="b" style="left:87px;top:594px;width:105px;height:20px;background:#007c00"></div>
<div class="r" style="left:87.0px;top:595.6px;width:104.6px;color:#fff">620597</div>
<div class="b" style="left:200px;top:594px;width:7px;height:20px;background:#007c00"></div>
<div class="b" style="left:208px;top:594px;width:686px;height:20px;background:#007c00"></div>
<div class="r" style="left:208.0px;top:595.6px;width:686.0px;color:#fff">620855</div>
<div class="b" style="left:895px;top:594px;width:54px;height:20px;background:#007c00"></div>
<div class="r" style="left:895.0px;top:595.6px;width:54.0px;color:#fff">621444</div>
<div class="b" style="left:987px;top:594px;width:922px;height:20px;background:#007c00"></div>
<div class="r" style="left:987.0px;top:595.6px;width:922.0px;color:#fff">621698</div>
<div class="b" style="left:87px;top:638px;width:30px;height:20px;background:#0000ff"></div>
<div class="r" style="left:87.0px;top:639.5px;width:30.0px;color:#fff">U...</div>
<div class="b" style="left:119px;top:638px;width:1px;height:20px;background:#ff0000"></div>
<div class="b" style="left:129px;top:638px;width:3px;height:20px;background:#ff0000"></div>
<div class="b" style="left:157px;top:638px;width:4px;height:20px;background:#ff0000"></div>
<div class="b" style="left:163px;top:638px;width:2px;height:20px;background:#ff0000"></div>
<div class="b" style="left:168px;top:638px;width:5px;height:20px;background:#ff0000"></div>
<div class="b" style="left:175px;top:638px;width:3px;height:20px;background:#ff0000"></div>
<div class="b" style="left:181px;top:638px;width:2px;height:20px;background:#ff0000"></div>
<div class="b" style="left:185px;top:638px;width:1px;height:20px;background:#ff0000"></div>
<div class="b" style="left:189px;top:638px;width:7px;height:20px;background:#f0ff00"></div>
<div class="b" style="left:196px;top:638px;width:8px;height:20px;background:#f0ff00"></div>
<div class="r" style="left:196.0px;top:639.5px;width:8.0px;color:#333">.</div>
<div class="b" style="left:205px;top:638px;width:1px;height:20px;background:#0000ff"></div>
<div class="b" style="left:207px;top:638px;width:1px;height:20px;background:#0000ff"></div>
<div class="b" style="left:297px;top:638px;width:13px;height:20px;background:#00e8ff"></div>
<div class="r" style="left:297.0px;top:639.5px;width:13.0px;color:#333">..</div>
<div class="b" style="left:518px;top:638px;width:2px;height:20px;background:#ff00ff"></div>
<div class="b" style="left:520px;top:638px;width:87px;height:20px;background:#ff0000"></div>
<div class="r" style="left:520.0px;top:639.5px;width:87.4px;color:#fff">Kringutrust...</div>
<div class="b" style="left:607px;top:638px;width:13px;height:20px;background:#b31212"></div>
<div class="r" style="left:607.4px;top:639.5px;width:12.3px;color:#fff">..</div>
<div class="b" style="left:645px;top:638px;width:3px;height:20px;background:#ff0000"></div>
<div class="b" style="left:653px;top:638px;width:3px;height:20px;background:#ff0000"></div>
<div class="b" style="left:779px;top:638px;width:61px;height:20px;background:#ff00ff"></div>
<div class="r" style="left:779.0px;top:639.5px;width:60.6px;color:#fff">Materi...</div>
<div class="b" style="left:862px;top:638px;width:1px;height:20px;background:#ff0000"></div>
<div class="b" style="left:907px;top:638px;width:17px;height:20px;background:#ff00ff"></div>
<div class="r" style="left:907.0px;top:639.5px;width:17.0px;color:#fff">P.</div>
<div class="b" style="left:948px;top:638px;width:7px;height:20px;background:#ff0000"></div>
<div class="b" style="left:955px;top:638px;width:31px;height:20px;background:#f0ff00"></div>
<div class="r" style="left:954.7px;top:639.5px;width:31.7px;color:#333">Vä...</div>
<div class="b" style="left:987px;top:638px;width:19px;height:20px;background:#f0ff00"></div>
<div class="r" style="left:987.0px;top:639.5px;width:18.5px;color:#333">B..</div>
<div class="b" style="left:1009px;top:638px;width:1px;height:20px;background:#ff0000"></div>
<div class="b" style="left:1013px;top:638px;width:1px;height:20px;background:#ff0000"></div>
<div class="b" style="left:1030px;top:638px;width:2px;height:20px;background:#ff0000"></div>
<div class="b" style="left:1033px;top:638px;width:3px;height:20px;background:#ff0000"></div>
<div class="b" style="left:1039px;top:638px;width:2px;height:20px;background:#ff00ff"></div>
<div class="b" style="left:1041px;top:638px;width:86px;height:20px;background:#00ff00"></div>
<div class="r" style="left:1041.0px;top:639.5px;width:85.5px;color:#333">Planerad s...</div>
<div class="b" style="left:1128px;top:638px;width:86px;height:20px;background:#00ff00"></div>
<div class="r" style="left:1127.8px;top:639.5px;width:86.2px;color:#333">Planerad s...</div>
<div class="b" style="left:1215px;top:638px;width:135px;height:20px;background:#00ff00"></div>
<div class="r" style="left:1215.0px;top:639.5px;width:135.0px;color:#333">Planerad service</div>
<div class="b" style="left:1350px;top:638px;width:558px;height:20px;background:#ff0000"></div>
<div class="r" style="left:1350.0px;top:639.5px;width:558.0px;color:#fff">ABB B</div>
<div class="b" style="left:108px;top:717px;width:11px;height:5px;background:#a00000"></div>
<div class="b" style="left:119px;top:691px;width:10px;height:31px;background:#006e00"></div>
<div class="b" style="left:129px;top:686px;width:11px;height:36px;background:#006e00"></div>
<div class="b" style="left:140px;top:683px;width:13px;height:39px;background:#006e00"></div>
<div class="b" style="left:151px;top:699px;width:12px;height:23px;background:#a00000"></div>
<div class="b" style="left:163px;top:710px;width:10px;height:12px;background:#a00000"></div>
<div class="b" style="left:173px;top:705px;width:13px;height:17px;background:#a00000"></div>
<div class="b" style="left:186px;top:721px;width:19px;height:1px;background:#a00000"></div>
<div class="b" style="left:205px;top:708px;width:11px;height:14px;background:#a00000"></div>
<div class="b" style="left:216px;top:682px;width:78px;height:40px;background:#006e00"></div>
<div class="b" style="left:294px;top:685px;width:9px;height:37px;background:#006e00"></div>
<div class="b" style="left:303px;top:682px;width:206px;height:40px;background:#006e00"></div>
<div class="b" style="left:509px;top:694px;width:13px;height:28px;background:#a00000"></div>
<div class="b" style="left:617px;top:689px;width:11px;height:33px;background:#006e00"></div>
<div class="b" style="left:628px;top:682px;width:13px;height:40px;background:#006e00"></div>
<div class="b" style="left:641px;top:692px;width:11px;height:30px;background:#006e00"></div>
<div class="b" style="left:652px;top:693px;width:9px;height:29px;background:#006e00"></div>
<div class="b" style="left:661px;top:682px;width:110px;height:40px;background:#006e00"></div>
<div class="b" style="left:771px;top:691px;width:11px;height:31px;background:#006e00"></div>
<div class="b" style="left:834px;top:700px;width:11px;height:22px;background:#a00000"></div>
<div class="b" style="left:845px;top:684px;width:13px;height:38px;background:#006e00"></div>
<div class="b" style="left:858px;top:686px;width:9px;height:36px;background:#006e00"></div>
<div class="b" style="left:867px;top:682px;width:24px;height:40px;background:#006e00"></div>
<div class="b" style="left:889px;top:702px;width:10px;height:20px;background:#a00000"></div>
<div class="b" style="left:899px;top:697px;width:13px;height:25px;background:#a00000"></div>
<div class="b" style="left:921px;top:688px;width:11px;height:34px;background:#006e00"></div>
<div class="b" style="left:932px;top:682px;width:13px;height:40px;background:#006e00"></div>
<div class="b" style="left:943px;top:721px;width:12px;height:1px;background:#a00000"></div>
<div class="b" style="left:997px;top:714px;width:11px;height:8px;background:#a00000"></div>
<div class="b" style="left:1008px;top:692px;width:11px;height:30px;background:#006e00"></div>
<div class="b" style="left:1019px;top:687px;width:13px;height:35px;background:#006e00"></div>
<div class="b" style="left:1030px;top:712px;width:13px;height:10px;background:#a00000"></div>
<div class="b" style="left:87px;top:745px;width:1269px;height:40px;background:#313131"></div>
<div class="b" style="left:87px;top:745px;width:21px;height:40px;background:#ff0000"></div>
<div class="b" style="left:108px;top:745px;width:11px;height:1px;background:#ffee00"></div>
<div class="b" style="left:108px;top:746px;width:11px;height:35px;background:#ff0000"></div>
<div class="b" style="left:119px;top:745px;width:10px;height:2px;background:#ffee00"></div>
<div class="b" style="left:119px;top:747px;width:10px;height:8px;background:#ff0000"></div>
<div class="b" style="left:129px;top:745px;width:11px;height:4px;background:#ff0000"></div>
<div class="b" style="left:151px;top:745px;width:12px;height:3px;background:#ffee00"></div>
<div class="b" style="left:151px;top:748px;width:12px;height:14px;background:#ff0000"></div>
<div class="b" style="left:163px;top:745px;width:10px;height:2px;background:#ffee00"></div>
<div class="b" style="left:163px;top:747px;width:10px;height:26px;background:#ff0000"></div>
<div class="b" style="left:173px;top:745px;width:11px;height:4px;background:#ffee00"></div>
<div class="b" style="left:173px;top:749px;width:11px;height:20px;background:#ff0000"></div>
<div class="b" style="left:184px;top:745px;width:11px;height:26px;background:#ff0000"></div>
<div class="b" style="left:195px;top:745px;width:11px;height:37px;background:#ff0000"></div>
<div class="b" style="left:206px;top:745px;width:11px;height:4px;background:#ff0000"></div>
<div class="b" style="left:238px;top:745px;width:11px;height:2px;background:#ffee00"></div>
<div class="b" style="left:281px;top:745px;width:11px;height:1px;background:#ffee00"></div>
<div class="b" style="left:292px;top:745px;width:11px;height:3px;background:#ffee00"></div>
<div class="b" style="left:411px;top:745px;width:11px;height:2px;background:#ffee00"></div>
<div class="b" style="left:509px;top:745px;width:11px;height:2px;background:#ffee00"></div>
<div class="b" style="left:509px;top:747px;width:11px;height:10px;background:#ff0000"></div>
<div class="b" style="left:520px;top:745px;width:98px;height:40px;background:#ff0000"></div>
<div class="b" style="left:618px;top:745px;width:11px;height:2px;background:#ffee00"></div>
<div class="b" style="left:618px;top:747px;width:11px;height:5px;background:#ff0000"></div>
<div class="b" style="left:639px;top:745px;width:22px;height:2px;background:#ffee00"></div>
<div class="b" style="left:639px;top:747px;width:22px;height:8px;background:#ff0000"></div>
<div class="b" style="left:770px;top:745px;width:10px;height:2px;background:#ffee00"></div>
<div class="b" style="left:770px;top:747px;width:10px;height:8px;background:#ff0000"></div>
<div class="b" style="left:780px;top:745px;width:55px;height:40px;background:#ff0000"></div>
<div class="b" style="left:835px;top:745px;width:11px;height:2px;background:#ffee00"></div>
<div class="b" style="left:835px;top:747px;width:11px;height:17px;background:#ff0000"></div>
<div class="b" style="left:846px;top:745px;width:10px;height:3px;background:#ffee00"></div>
<div class="b" style="left:856px;top:745px;width:11px;height:4px;background:#ffee00"></div>
<div class="b" style="left:889px;top:745px;width:11px;height:2px;background:#ff0000"></div>
<div class="b" style="left:900px;top:745px;width:11px;height:2px;background:#ffee00"></div>
<div class="b" style="left:900px;top:747px;width:11px;height:13px;background:#ff0000"></div>
<div class="b" style="left:911px;top:745px;width:10px;height:40px;background:#ff0000"></div>
<div class="b" style="left:921px;top:745px;width:11px;height:7px;background:#ff0000"></div>
<div class="b" style="left:943px;top:745px;width:11px;height:2px;background:#ffee00"></div>
<div class="b" style="left:943px;top:747px;width:11px;height:25px;background:#ff0000"></div>
<div class="b" style="left:954px;top:745px;width:43px;height:40px;background:#ff0000"></div>
<div class="b" style="left:997px;top:745px;width:11px;height:2px;background:#ffee00"></div>
<div class="b" style="left:997px;top:747px;width:11px;height:31px;background:#ff0000"></div>
<div class="b" style="left:1008px;top:745px;width:11px;height:5px;background:#ffee00"></div>
<div class="b" style="left:1008px;top:750px;width:11px;height:6px;background:#ff0000"></div>
<div class="b" style="left:1019px;top:745px;width:11px;height:3px;background:#ffee00"></div>
<div class="b" style="left:1019px;top:748px;width:11px;height:3px;background:#ff0000"></div>
<div class="b" style="left:1030px;top:745px;width:11px;height:3px;background:#ffee00"></div>
<div class="b" style="left:1030px;top:748px;width:11px;height:28px;background:#ff0000"></div>
<div class="b" style="left:1041px;top:745px;width:315px;height:40px;background:#ff0000"></div>
<div class="b" style="left:87px;top:814px;width:115px;height:20px;background:#007c00"></div>
<div class="r" style="left:87.0px;top:815.6px;width:114.8px;color:#fff">620858</div>
<div class="b" style="left:209px;top:814px;width:193px;height:20px;background:#007c00"></div>
<div class="r" style="left:209.0px;top:815.6px;width:192.7px;color:#fff">620860</div>
<div class="b" style="left:408px;top:814px;width:56px;height:20px;background:#007c00"></div>
<div class="r" style="left:408.2px;top:815.6px;width:56.1px;color:#fff">621101</div>
<div class="b" style="left:465px;top:814px;width:81px;height:20px;background:#007c00"></div>
<div class="r" style="left:465.3px;top:815.6px;width:80.5px;color:#fff">621103</div>
<div class="b" style="left:547px;top:814px;width:189px;height:20px;background:#007c00"></div>
<div class="r" style="left:547.0px;top:815.6px;width:189.0px;color:#fff">621104</div>
<div class="b" style="left:737px;top:814px;width:68px;height:20px;background:#007c00"></div>
<div class="r" style="left:737.0px;top:815.6px;width:68.4px;color:#fff">621447</div>
<div class="b" style="left:806px;top:814px;width:115px;height:20px;background:#007c00"></div>
<div class="r" style="left:806.4px;top:815.6px;width:114.6px;color:#fff">621445</div>
<div class="b" style="left:922px;top:814px;width:149px;height:20px;background:#007c00"></div>
<div class="r" style="left:922.0px;top:815.6px;width:149.0px;color:#fff">621471</div>
<div class="b" style="left:1073px;top:814px;width:248px;height:20px;background:#007c00"></div>
<div class="r" style="left:1073.0px;top:815.6px;width:248.0px;color:#fff">621699</div>
<div class="b" style="left:1331px;top:814px;width:472px;height:20px;background:#007c00"></div>
<div class="r" style="left:1331.0px;top:815.6px;width:472.0px;color:#fff">621955</div>
<div class="b" style="left:202px;top:857px;width:6px;height:20px;background:#f0ff00"></div>
<div class="b" style="left:209px;top:857px;width:19px;height:20px;background:#f0ff00"></div>
<div class="r" style="left:209.0px;top:858.7px;width:19.0px;color:#333">B..</div>
<div class="b" style="left:265px;top:857px;width:1px;height:20px;background:#ff0000"></div>
<div class="b" style="left:268px;top:857px;width:5px;height:20px;background:#ff0000"></div>
<div class="b" style="left:274px;top:857px;width:1px;height:20px;background:#ff0000"></div>
<div class="b" style="left:298px;top:857px;width:14px;height:20px;background:#00e8ff"></div>
<div class="r" style="left:298.0px;top:858.7px;width:14.0px;color:#333">..</div>
<div class="b" style="left:359px;top:857px;width:1px;height:20px;background:#ff0000"></div>
<div class="b" style="left:397px;top:857px;width:11px;height:20px;background:#f0ff00"></div>
<div class="b" style="left:408px;top:857px;width:7px;height:20px;background:#f0ff00"></div>
<div class="r" style="left:407.6px;top:858.7px;width:7.4px;color:#333">.</div>
<div class="b" style="left:417px;top:857px;width:1px;height:20px;background:#ff0000"></div>
<div class="b" style="left:621px;top:857px;width:1px;height:20px;background:#00ff00"></div>
<div class="b" style="left:739px;top:857px;width:42px;height:20px;background:#f0ff00"></div>
<div class="r" style="left:739.0px;top:858.7px;width:42.0px;color:#333">Vän...</div>
<div class="b" style="left:781px;top:857px;width:23px;height:20px;background:#b31212"></div>
<div class="r" style="left:781.0px;top:858.7px;width:23.0px;color:#fff">R...</div>
<div class="b" style="left:817px;top:857px;width:16px;height:20px;background:#00e8ff"></div>
<div class="r" style="left:817.0px;top:858.7px;width:16.0px;color:#333">...</div>
<div class="b" style="left:839px;top:857px;width:3px;height:20px;background:#ff0000"></div>
<div class="b" style="left:851px;top:857px;width:1px;height:20px;background:#ff0000"></div>
<div class="b" style="left:855px;top:857px;width:1px;height:20px;background:#ff0000"></div>
<div class="b" style="left:859px;top:857px;width:1px;height:20px;background:#ff0000"></div>
<div class="b" style="left:990px;top:857px;width:29px;height:20px;background:#ff00ff"></div>
<div class="r" style="left:990.0px;top:858.7px;width:28.7px;color:#fff">P...</div>
<div class="b" style="left:1026px;top:857px;width:2px;height:20px;background:#ff0000"></div>
<div class="b" style="left:1071px;top:857px;width:8px;height:20px;background:#f0ff00"></div>
<div class="b" style="left:1322px;top:857px;width:11px;height:20px;background:#f0ff00"></div>
<div class="r" style="left:1322.0px;top:858.7px;width:10.7px;color:#333">.</div>
<div class="b" style="left:1557px;top:857px;width:2px;height:20px;background:#ff0000"></div>
<div class="b" style="left:1775px;top:857px;width:27px;height:20px;background:#ff0000"></div>
<div class="r" style="left:1775.0px;top:858.7px;width:27.0px;color:#fff">F...</div>
<div class="b" style="left:1803px;top:857px;width:106px;height:20px;background:#ff0000"></div>
<div class="r" style="left:1803.0px;top:858.7px;width:105.8px;color:#fff">ABB B</div>
<div class="b" style="left:87px;top:901px;width:110px;height:40px;background:#006e00"></div>
<div class="b" style="left:216px;top:939px;width:11px;height:2px;background:#a00000"></div>
<div class="b" style="left:227px;top:901px;width:35px;height:40px;background:#006e00"></div>
<div class="b" style="left:260px;top:917px;width:10px;height:24px;background:#a00000"></div>
<div class="b" style="left:270px;top:913px;width:11px;height:28px;background:#a00000"></div>
<div class="b" style="left:281px;top:901px;width:13px;height:40px;background:#006e00"></div>
<div class="b" style="left:294px;top:903px;width:9px;height:38px;background:#006e00"></div>
<div class="b" style="left:303px;top:901px;width:56px;height:40px;background:#006e00"></div>
<div class="b" style="left:359px;top:907px;width:9px;height:34px;background:#006e00"></div>
<div class="b" style="left:368px;top:901px;width:24px;height:40px;background:#006e00"></div>
<div class="b" style="left:390px;top:917px;width:13px;height:24px;background:#a00000"></div>
<div class="b" style="left:411px;top:918px;width:11px;height:23px;background:#a00000"></div>
<div class="b" style="left:422px;top:901px;width:23px;height:40px;background:#006e00"></div>
<div class="b" style="left:445px;top:904px;width:12px;height:37px;background:#006e00"></div>
<div class="b" style="left:455px;top:930px;width:11px;height:11px;background:#a00000"></div>
<div class="b" style="left:466px;top:901px;width:78px;height:40px;background:#006e00"></div>
<div class="b" style="left:542px;top:932px;width:10px;height:9px;background:#a00000"></div>
<div class="b" style="left:552px;top:901px;width:111px;height:40px;background:#006e00"></div>
<div class="b" style="left:663px;top:905px;width:9px;height:36px;background:#006e00"></div>
<div class="b" style="left:672px;top:901px;width:56px;height:40px;background:#006e00"></div>
<div class="b" style="left:728px;top:931px;width:11px;height:10px;background:#a00000"></div>
<div class="b" style="left:739px;top:938px;width:10px;height:3px;background:#a00000"></div>
<div class="b" style="left:802px;top:924px;width:11px;height:17px;background:#a00000"></div>
<div class="b" style="left:813px;top:905px;width:10px;height:36px;background:#006e00"></div>
<div class="b" style="left:823px;top:901px;width:13px;height:40px;background:#006e00"></div>
<div class="b" style="left:836px;top:910px;width:10px;height:31px;background:#006e00"></div>
<div class="b" style="left:846px;top:912px;width:10px;height:29px;background:#006e00"></div>
<div class="b" style="left:856px;top:908px;width:11px;height:33px;background:#006e00"></div>
<div class="b" style="left:867px;top:901px;width:45px;height:40px;background:#006e00"></div>
<div class="b" style="left:912px;top:911px;width:11px;height:30px;background:#006e00"></div>
<div class="b" style="left:923px;top:912px;width:9px;height:29px;background:#006e00"></div>
<div class="b" style="left:932px;top:902px;width:12px;height:39px;background:#006e00"></div>
<div class="b" style="left:944px;top:905px;width:10px;height:36px;background:#006e00"></div>
<div class="b" style="left:954px;top:901px;width:34px;height:40px;background:#006e00"></div>
<div class="b" style="left:986px;top:931px;width:13px;height:10px;background:#a00000"></div>
<div class="b" style="left:1019px;top:907px;width:11px;height:34px;background:#006e00"></div>
<div class="b" style="left:1030px;top:905px;width:10px;height:36px;background:#006e00"></div>
<div class="b" style="left:1040px;top:901px;width:24px;height:40px;background:#006e00"></div>
<div class="b" style="left:1062px;top:932px;width:11px;height:9px;background:#a00000"></div>
<div class="b" style="left:1073px;top:920px;width:11px;height:21px;background:#a00000"></div>
<div class="b" style="left:1084px;top:901px;width:100px;height:40px;background:#006e00"></div>
<div class="b" style="left:1184px;top:902px;width:8px;height:39px;background:#006e00"></div>
<div class="b" style="left:1192px;top:901px;width:34px;height:40px;background:#006e00"></div>
<div class="b" style="left:1226px;top:903px;width:10px;height:38px;background:#006e00"></div>
<div class="b" style="left:1236px;top:901px;width:22px;height:40px;background:#006e00"></div>
<div class="b" style="left:1258px;top:903px;width:10px;height:38px;background:#006e00"></div>
<div class="b" style="left:1268px;top:901px;width:46px;height:40px;background:#006e00"></div>
<div class="b" style="left:1312px;top:937px;width:13px;height:4px;background:#a00000"></div>
<div class="b" style="left:1333px;top:901px;width:219px;height:40px;background:#006e00"></div>
<div class="b" style="left:1552px;top:908px;width:9px;height:33px;background:#006e00"></div>
<div class="b" style="left:1561px;top:901px;width:208px;height:40px;background:#006e00"></div>
<div class="b" style="left:1767px;top:915px;width:13px;height:26px;background:#a00000"></div>
<div class="b" style="left:87px;top:965px;width:1726px;height:39px;background:#313131"></div>
<div class="b" style="left:194px;top:965px;width:11px;height:2px;background:#ffee00"></div>
<div class="b" style="left:194px;top:967px;width:11px;height:14px;background:#ff0000"></div>
<div class="b" style="left:205px;top:965px;width:11px;height:39px;background:#ff0000"></div>
<div class="b" style="left:216px;top:965px;width:11px;height:38px;background:#ff0000"></div>
<div class="b" style="left:260px;top:965px;width:10px;height:2px;background:#ffee00"></div>
<div class="b" style="left:260px;top:967px;width:10px;height:14px;background:#ff0000"></div>
<div class="b" style="left:270px;top:965px;width:11px;height:12px;background:#ff0000"></div>
<div class="b" style="left:292px;top:965px;width:11px;height:2px;background:#ffee00"></div>
<div class="b" style="left:357px;top:965px;width:11px;height:5px;background:#ff0000"></div>
<div class="b" style="left:390px;top:965px;width:11px;height:2px;background:#ffee00"></div>
<div class="b" style="left:390px;top:967px;width:11px;height:13px;background:#ff0000"></div>
<div class="b" style="left:401px;top:965px;width:10px;height:39px;background:#ff0000"></div>
<div class="b" style="left:411px;top:965px;width:11px;height:2px;background:#ffee00"></div>
<div class="b" style="left:411px;top:967px;width:11px;height:13px;background:#ff0000"></div>
<div class="b" style="left:444px;top:965px;width:11px;height:2px;background:#ffee00"></div>
<div class="b" style="left:455px;top:965px;width:11px;height:2px;background:#ff0000"></div>
<div class="b" style="left:542px;top:965px;width:10px;height:5px;background:#ff0000"></div>
<div class="b" style="left:617px;top:965px;width:11px;height:2px;background:#ff0000"></div>
<div class="b" style="left:661px;top:965px;width:11px;height:4px;background:#ff0000"></div>
<div class="b" style="left:726px;top:965px;width:11px;height:2px;background:#ff0000"></div>
<div class="b" style="left:737px;top:965px;width:11px;height:2px;background:#ffee00"></div>
<div class="b" style="left:737px;top:967px;width:11px;height:35px;background:#ff0000"></div>
<div class="b" style="left:748px;top:965px;width:54px;height:39px;background:#ff0000"></div>
<div class="b" style="left:802px;top:965px;width:11px;height:9px;background:#ff0000"></div>
<div class="b" style="left:813px;top:965px;width:10px;height:2px;background:#ffee00"></div>
<div class="b" style="left:834px;top:965px;width:11px;height:7px;background:#ff0000"></div>
<div class="b" style="left:845px;top:965px;width:11px;height:2px;background:#ffee00"></div>
<div class="b" style="left:845px;top:967px;width:11px;height:8px;background:#ff0000"></div>
<div class="b" style="left:856px;top:965px;width:11px;height:2px;background:#ffee00"></div>
<div class="b" style="left:856px;top:967px;width:11px;height:5px;background:#ff0000"></div>
<div class="b" style="left:921px;top:965px;width:11px;height:2px;background:#ff0000"></div>
<div class="b" style="left:943px;top:965px;width:11px;height:2px;background:#ffee00"></div>
<div class="b" style="left:943px;top:967px;width:11px;height:2px;background:#ff0000"></div>
<div class="b" style="left:986px;top:965px;width:11px;height:2px;background:#ffee00"></div>
<div class="b" style="left:986px;top:967px;width:11px;height:26px;background:#ff0000"></div>
<div class="b" style="left:997px;top:965px;width:22px;height:39px;background:#ff0000"></div>
<div class="b" style="left:1019px;top:965px;width:11px;height:2px;background:#ffee00"></div>
<div class="b" style="left:1019px;top:967px;width:11px;height:3px;background:#ff0000"></div>
<div class="b" style="left:1030px;top:965px;width:10px;height:2px;background:#ffee00"></div>
<div class="b" style="left:1062px;top:965px;width:11px;height:9px;background:#ff0000"></div>
<div class="b" style="left:1073px;top:965px;width:11px;height:19px;background:#ff0000"></div>
<div class="b" style="left:1225px;top:965px;width:11px;height:2px;background:#ffee00"></div>
<div class="b" style="left:1257px;top:965px;width:11px;height:2px;background:#ff0000"></div>
<div class="b" style="left:1312px;top:965px;width:10px;height:2px;background:#ffee00"></div>
<div class="b" style="left:1312px;top:967px;width:10px;height:5px;background:#ff0000"></div>
<div class="b" style="left:1322px;top:965px;width:11px;height:36px;background:#ff0000"></div>
<div class="b" style="left:1550px;top:965px;width:11px;height:7px;background:#ff0000"></div>
<div class="b" style="left:1767px;top:965px;width:11px;height:13px;background:#ff0000"></div>
<div class="b" style="left:1778px;top:965px;width:35px;height:39px;background:#ff0000"></div><div class="a" style="left:85.5px;top:331px;width:1.5px;height:678px;background:#bdbdbd"></div>
<div class="a" style="left:61px;top:569.5px;width:1849px;height:1.5px;background:#8a8a8a"></div>
<div class="a" style="left:61px;top:789px;width:1849px;height:1.5px;background:#8a8a8a"></div>
<div class="rl" style="left:67.5px;top:563px">1820</div>
<div class="rl" style="left:67.5px;top:782.5px">1830</div>
<div class="rl" style="left:67.5px;top:1002px">1880</div>

</body></html>
